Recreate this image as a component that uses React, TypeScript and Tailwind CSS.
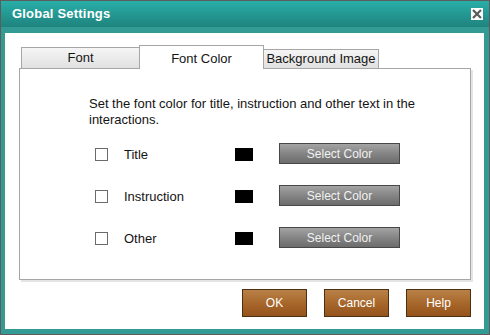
export default function App() {
  const rows = ["Title", "Instruction", "Other"]

  return (
    <div className="w-[490px] h-[335px] flex flex-col border border-[#5c5c5c] bg-[#339a94] font-['Liberation_Sans',Arial,sans-serif] text-[#141414]">
      {/* title bar */}
      <div className="h-[26px] flex items-center justify-between pl-[11px] pr-[6px] bg-gradient-to-b from-[#29aea8] to-[#1f837e]">
        <span className="text-[13px] font-bold text-white tracking-[0.2px]">Global Settings</span>
        <div className="w-[12px] h-[12px] bg-white flex items-center justify-center">
          <svg width="10" height="10" viewBox="0 0 10 10">
            <path d="M1.8 1.8 L8.2 8.2 M8.2 1.8 L1.8 8.2" stroke="#5a5a5a" strokeWidth="2.2" strokeLinecap="square" />
          </svg>
        </div>
      </div>

      {/* body */}
      <div className="flex-1 pt-[6px] pl-[4px] pr-[5px] pb-[5px] flex">
        <div className="flex-1 bg-white pl-[14px] pt-[12px]">
          {/* tabs */}
          <div className="flex items-end h-[23px] pl-[2px]">
            <div className="w-[119px] h-[21px] border border-b-0 border-[#a6a6a6] bg-gradient-to-b from-[#f5f5f5] to-[#e1e1e1] flex items-center justify-center text-[13px]">
              Font
            </div>
            <div className="relative z-10 -ml-px w-[125px] h-[24px] mb-[-1px] border border-b-0 border-[#a6a6a6] bg-white flex items-start justify-center pt-[3px] text-[13px]">
              Font Color
            </div>
            <div className="-ml-px w-[116px] h-[19px] border border-b-0 border-[#a6a6a6] bg-gradient-to-b from-[#f5f5f5] to-[#e1e1e1] flex items-center justify-center text-[13px] whitespace-nowrap">
              Background Image
            </div>
          </div>

          {/* panel */}
          <div className="w-[452px] h-[212px] border border-[#a6a6a6] shadow-[2px_2px_0_#e4e4e4] pl-[69px] pt-[27px]">
            <p className="w-[345px] text-[13px] leading-[16px]">
              Set the font color for title, instruction and other text in the interactions.
            </p>
            <div className="mt-[15px] flex flex-col gap-[21px] pl-[6px]">
              {rows.map((r) => (
                <div key={r} className="h-[21px] flex items-center">
                  <div className="w-[13px] h-[13px] border border-[#6b6b6b] bg-white mt-[2px]" />
                  <span className="ml-[16px] w-[111px] text-[13px] mt-[2px]">{r}</span>
                  <div className="w-[18px] h-[13px] bg-black mt-[2px]" />
                  <button className="ml-[26px] w-[121px] h-[21px] border border-[#474747] bg-gradient-to-b from-[#a4a4a4] via-[#858585] to-[#6c6c6c] text-[12px] text-[#f2f2f2] flex items-center justify-center">
                    Select Color
                  </button>
                </div>
              ))}
            </div>
          </div>

          {/* footer buttons */}
          <div className="mt-[9px] w-[452px] flex justify-end gap-[17px]">
            {["OK", "Cancel", "Help"].map((b) => (
              <button
                key={b}
                className="w-[65px] h-[28px] border border-[#4a2f12] bg-gradient-to-b from-[#b88147] via-[#a8682c] to-[#93531a] text-[12px] text-white flex items-center justify-center"
              >
                {b}
              </button>
            ))}
          </div>
        </div>
      </div>
    </div>
  )
}
